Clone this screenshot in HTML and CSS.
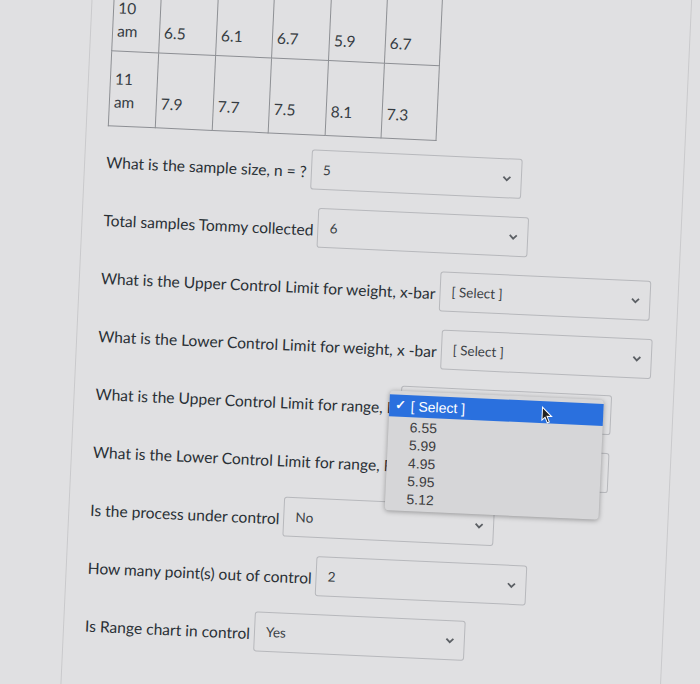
FILE: index.html
```html
<!DOCTYPE html>
<html>
<head>
<meta charset="utf-8">
<link rel="stylesheet" href="styles.css">
</head>
<body>
<div class="page">
  <div class="question">
    <table class="data">
      <colgroup>
        <col class="c0"><col class="c1"><col class="c2"><col class="c3"><col class="c4"><col class="c5">
      </colgroup>
      <tr class="r1"><td>10<br>am</td><td>6.5</td><td>6.1</td><td>6.7</td><td>5.9</td><td>6.7</td></tr>
      <tr class="r2"><td>11<br>am</td><td>7.9</td><td>7.7</td><td>7.5</td><td>8.1</td><td>7.3</td></tr>
    </table>

    <div class="q first">
      <span class="label">What is the sample size, n = ?</span>
      <div class="select"><span class="val">5</span><svg class="chev" width="10" height="7" viewBox="0 0 10 7"><polyline points="1.5,1.5 5,5 8.5,1.5"/></svg></div>
    </div>
    <div class="q">
      <span class="label">Total samples Tommy collected</span>
      <div class="select"><span class="val">6</span><svg class="chev" width="10" height="7" viewBox="0 0 10 7"><polyline points="1.5,1.5 5,5 8.5,1.5"/></svg></div>
    </div>
    <div class="q">
      <span class="label">What is the Upper Control Limit for weight, x-bar</span>
      <div class="select"><span class="val">[ Select ]</span><svg class="chev" width="10" height="7" viewBox="0 0 10 7"><polyline points="1.5,1.5 5,5 8.5,1.5"/></svg></div>
    </div>
    <div class="q">
      <span class="label">What is the Lower Control Limit for weight, x -bar</span>
      <div class="select"><span class="val">[ Select ]</span><svg class="chev" width="10" height="7" viewBox="0 0 10 7"><polyline points="1.5,1.5 5,5 8.5,1.5"/></svg></div>
    </div>
    <div class="q">
      <span class="label">What is the Upper Control Limit for range, R</span>
      <div class="select open"><span class="val">[ Select ]</span><svg class="chev" width="10" height="7" viewBox="0 0 10 7"><polyline points="1.5,1.5 5,5 8.5,1.5"/></svg>
        <div class="popup">
          <div class="opt active"><span class="check">✓</span>[ Select ]</div>
          <div class="opt">6.55</div>
          <div class="opt">5.99</div>
          <div class="opt">4.95</div>
          <div class="opt">5.95</div>
          <div class="opt">5.12</div>
          <svg class="cursor" width="12" height="18" viewBox="0 0 12 18"><path d="M1 1 L1 14 L4 11 L6.5 16.5 L8.5 15.5 L6 10 L10.5 10 Z"/></svg>
        </div>
      </div>
    </div>
    <div class="q">
      <span class="label">What is the Lower Control Limit for range, R</span>
      <div class="select"><span class="val">[ Select ]</span><svg class="chev" width="10" height="7" viewBox="0 0 10 7"><polyline points="1.5,1.5 5,5 8.5,1.5"/></svg></div>
    </div>
    <div class="q">
      <span class="label">Is the process under control</span>
      <div class="select"><span class="val">No</span><svg class="chev" width="10" height="7" viewBox="0 0 10 7"><polyline points="1.5,1.5 5,5 8.5,1.5"/></svg></div>
    </div>
    <div class="q">
      <span class="label">How many point(s) out of control</span>
      <div class="select"><span class="val">2</span><svg class="chev" width="10" height="7" viewBox="0 0 10 7"><polyline points="1.5,1.5 5,5 8.5,1.5"/></svg></div>
    </div>
    <div class="q">
      <span class="label">Is Range chart in control</span>
      <div class="select"><span class="val">Yes</span><svg class="chev" width="10" height="7" viewBox="0 0 10 7"><polyline points="1.5,1.5 5,5 8.5,1.5"/></svg></div>
    </div>
  </div>
</div>
</body>
</html>
```

FILE: styles.css
```css
html, body {
  margin: 0;
  padding: 0;
  background: #e0e0e2;
  overflow: hidden;
  height: 684px;
}

.page {
  width: 598px;
  height: 760px;
  margin-left: 76px;
  margin-top: -40px;
  padding-top: 40px;
  border-left: 1px solid #c9c9cc;
  border-right: 1px solid #c9c9cc;
  transform: rotate(2.6deg);
  transform-origin: 24px 382px;
  font-family: Lato, "Open Sans", sans-serif;
  color: #2a3036;
}

.question {
  padding: 0 20px 0 21px;
}

.data {
  border-collapse: collapse;
  margin-top: -17px;
  font-size: 15.5px;
  color: #363c42;
}

.data td {
  border: 1px solid #8d8f94;
  height: 46px;
  padding: 12px 3px 12px 4px;
  line-height: 23px;
  vertical-align: bottom;
}

.data .r1 td {
  padding-bottom: 8px;
}

.data .r2 td {
  padding-top: 16px;
}

.c0 { width: 47px; }
.c1 { width: 57px; }
.c2 { width: 56px; }
.c3 { width: 57px; }
.c4 { width: 56px; }
.c5 { width: 55px; }

.q {
  display: flex;
  align-items: center;
  height: 40px;
  margin-top: 18px;
}

.q.first {
  margin-top: 14px;
}

.label {
  font-size: 15.6px;
  padding-top: 4px;
  white-space: nowrap;
  margin-right: 4px;
}

.select {
  position: relative;
  width: 211px;
  height: 40px;
  flex: none;
  border: 1px solid #b7b8bc;
  border-radius: 3px;
  display: flex;
  align-items: center;
  justify-content: space-between;
  padding: 0 9px 0 11px;
  box-sizing: border-box;
  font-size: 13.5px;
  color: #3a3f45;
}

.chev polyline {
  fill: none;
  stroke: #5c6065;
  stroke-width: 1.8;
}

.popup {
  position: absolute;
  left: -12px;
  top: 4px;
  width: 214px;
  padding: 4px 0 3px;
  background: #d6d6d8;
  border-radius: 4px;
  box-shadow: 0 1px 5px rgba(0, 0, 0, 0.35);
  font-family: "Liberation Sans", Arial, sans-serif;
  font-size: 14px;
  color: #3c3c3e;
  z-index: 5;
}

.opt {
  height: 18px;
  line-height: 18px;
  padding-left: 21px;
}

.opt.active {
  position: relative;
  height: 22px;
  line-height: 22px;
  background: #2a70de;
  color: #ffffff;
  margin-bottom: 1px;
}

.check {
  position: absolute;
  left: 5px;
  top: 0;
  font-size: 13px;
  font-weight: bold;
}

.cursor {
  position: absolute;
  left: 152px;
  top: 9px;
}

.cursor path {
  fill: #222;
  stroke: #fff;
  stroke-width: 1;
}
```
